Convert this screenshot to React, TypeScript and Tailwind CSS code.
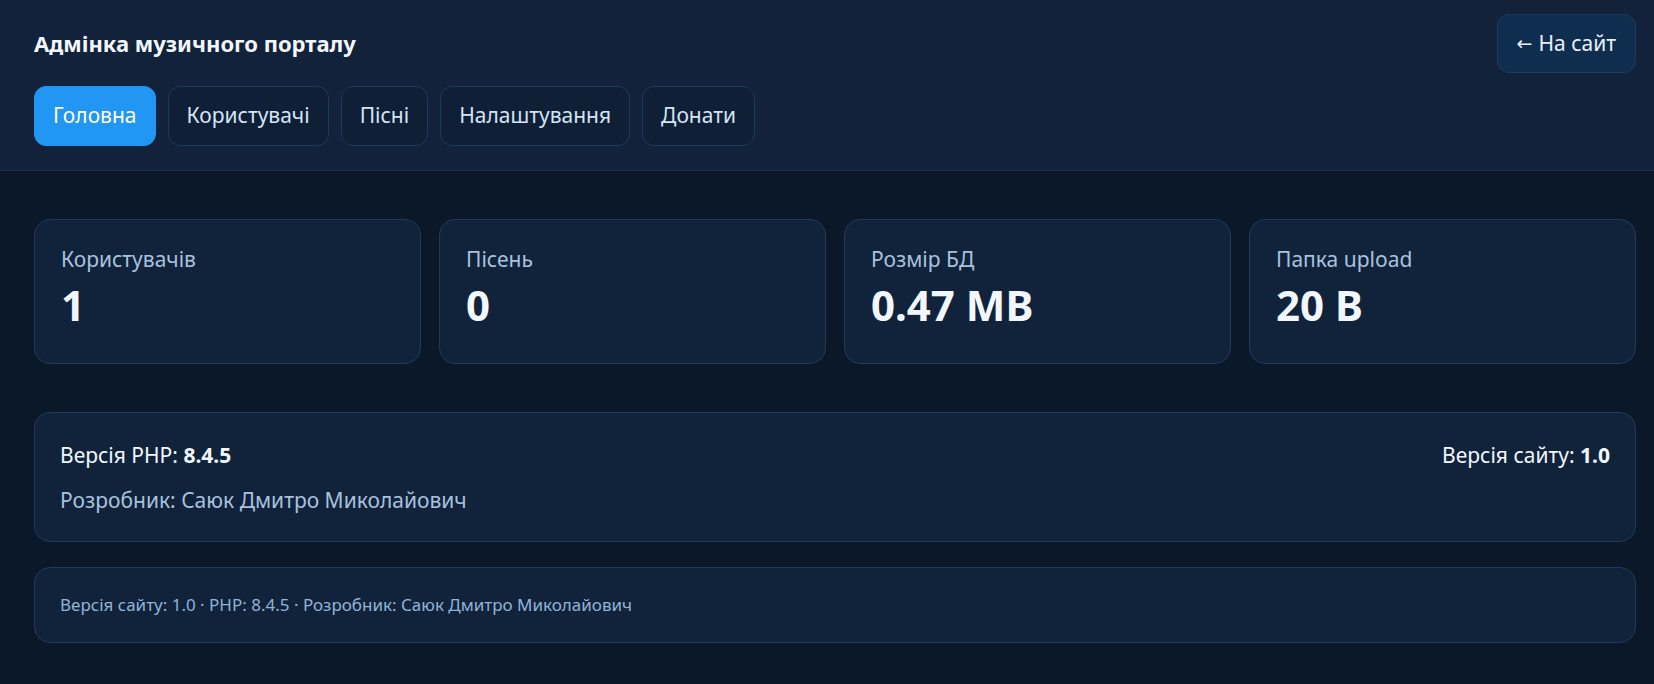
import React from "react";

const font = { fontFamily: '"Noto Sans", "Open Sans", sans-serif' };

function NavBtn({ label, active }: { label: string; active?: boolean }) {
  return (
    <button
      className={
        active
          ? "h-[60px] px-[18px] rounded-[12px] bg-[#2196f3] text-white text-[21px] flex items-center border border-[#2196f3]"
          : "h-[60px] px-[18px] rounded-[12px] bg-[#0e1f36] text-[#d5e5f6] text-[21px] flex items-center border border-[#1f3a5a]"
      }
    >
      {label}
    </button>
  );
}

function Stat({ label, value }: { label: string; value: string }) {
  return (
    <div className="h-[145px] rounded-[16px] bg-[#10233b] border border-[#1f3a5a] pl-[26px] pt-[24px] flex flex-col">
      <div className="text-[21px] leading-[30px] text-[#a9c2df]">{label}</div>
      <div className="text-[42px] leading-[52px] font-bold text-[#f2f7ff] mt-[5px]">{value}</div>
    </div>
  );
}

export default function App() {
  return (
    <div style={font} className="min-h-[684px] bg-[#0b1829] text-[#e6eef8]">
      <header className="bg-[#11223a] border-b border-[#1b3452] pl-[34px] pr-[18px] pt-[14px] pb-[24px]">
        <div className="flex items-center justify-between">
          <h1 className="text-[22px] font-bold text-[#f2f7ff]">Адмінка музичного порталу</h1>
          <button className="h-[59px] px-[19px] rounded-[12px] bg-[#0f2d4e] border border-[#1d3b5e] text-[#e8f1fb] text-[21px] flex items-center">
            <span className="font-['DejaVu_Sans'] text-[19px] mr-[6px]">←</span>
            <span>На сайт</span>
          </button>
        </div>
        <nav className="mt-[13px] flex gap-[12px]">
          <NavBtn label="Головна" active />
          <NavBtn label="Користувачі" />
          <NavBtn label="Пісні" />
          <NavBtn label="Налаштування" />
          <NavBtn label="Донати" />
        </nav>
      </header>
      <main className="pl-[34px] pr-[18px] pt-[48px] pb-[40px]">
        <div className="grid grid-cols-4 gap-[18px]">
          <Stat label="Користувачів" value="1" />
          <Stat label="Пісень" value="0" />
          <Stat label="Розмір БД" value="0.47 MB" />
          <Stat label="Папка upload" value="20 B" />
        </div>
        <div className="mt-[48px] h-[130px] rounded-[16px] bg-[#10233b] border border-[#1f3a5a] px-[25px] pt-[27px]">
          <div className="flex justify-between text-[21px] leading-[30px] text-[#f2f7ff]">
            <div>
              Версія PHP: <b>8.4.5</b>
            </div>
            <div>
              Версія сайту: <b>1.0</b>
            </div>
          </div>
          <div className="mt-[15px] text-[21px] leading-[30px] text-[#a9c2df]">
            Розробник: Саюк Дмитро Миколайович
          </div>
        </div>
        <div className="mt-[25px] h-[76px] rounded-[16px] bg-[#10233b] border border-[#1f3a5a] px-[25px] flex items-center text-[17px] text-[#93b3d6]">
          Версія сайту: 1.0 · PHP: 8.4.5 · Розробник: Саюк Дмитро Миколайович
        </div>
      </main>
    </div>
  );
}
